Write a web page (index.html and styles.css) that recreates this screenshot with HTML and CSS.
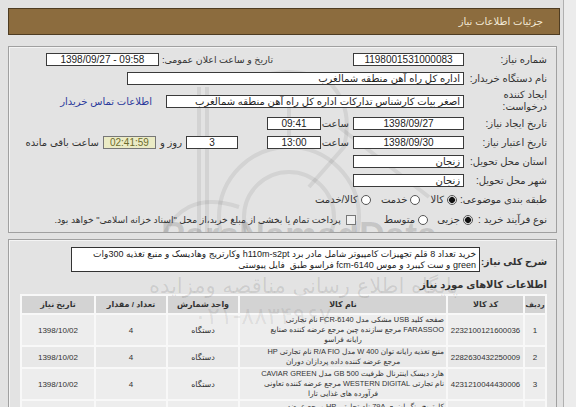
FILE: index.html
```html
<!DOCTYPE html>
<html lang="fa">
<head>
<meta charset="utf-8">
<title>جزئیات اطلاعات نیاز</title>
<link rel="stylesheet" href="styles.css">
</head>
<body>
<div class="page">
  <div class="header">جزئیات اطلاعات نیاز</div>

  <div class="panel info">
    <div class="wm-latin">ParsNamadData</div>
    <svg class="wm-logo" width="300" height="190" viewBox="0 0 300 190">
      <circle cx="150" cy="150" r="70" />
      <circle cx="150" cy="150" r="45" />
      <path d="M60 20 L60 190 M68 20 L68 190 M110 15 Q150 -5 190 15 Q215 40 205 80 L170 120" />
      <path d="M20 180 Q40 120 100 140 M200 60 L290 130 M150 30 L150 80" />
    </svg>

    <div class="row">
      <div class="lbl">شماره نیاز:</div>
      <div class="box w111">1198001531000083</div>
      <div class="lbl2">تاریخ و ساعت اعلان عمومی:</div>
      <div class="box w113 ml3 ltr">1398/09/27 - 09:58</div>
    </div>

    <div class="row">
      <div class="lbl">نام دستگاه خریدار:</div>
      <div class="box w337 tr">اداره کل راه آهن منطقه شمالغرب</div>
    </div>

    <div class="row tall">
      <div class="lbl">ایجاد کننده<br>درخواست:</div>
      <div class="box w298 tr">اصغر بیات کارشناس تدارکات اداره کل راه آهن منطقه شمالغرب</div>
      <a class="link" href="#">اطلاعات تماس خریدار</a>
    </div>

    <div class="row">
      <div class="lbl">تاریخ ایجاد نیاز:</div>
      <div class="box w111">1398/09/27</div>
      <div class="hour">ساعت</div>
      <div class="box w54">09:41</div>
    </div>

    <div class="row">
      <div class="lbl">تاریخ اعتبار نیاز:</div>
      <div class="box w111">1398/09/30</div>
      <div class="hour">ساعت</div>
      <div class="box w54">13:00</div>
      <div class="box w52 days">3</div>
      <div class="small-lbl">روز و</div>
      <div class="box w53 timer">02:41:59</div>
      <div class="small-lbl">ساعت باقی مانده</div>
    </div>

    <div class="row">
      <div class="lbl">استان محل تحویل:</div>
      <div class="box w111 tr">زنجان</div>
    </div>

    <div class="row">
      <div class="lbl">شهر محل تحویل:</div>
      <div class="box w111 tr">زنجان</div>
    </div>

    <div class="row">
      <div class="lbl">طبقه بندی موضوعی:</div>
      <div class="opts cat">
        <span class="opt"><span class="radio on"></span>کالا</span>
        <span class="opt"><span class="radio"></span>خدمت</span>
        <span class="opt"><span class="radio"></span>کالا/خدمت</span>
      </div>
    </div>

    <div class="row last">
      <div class="lbl narrow">نوع فرآیند خرید :</div>
      <div class="opts proc">
        <span class="opt"><span class="radio on"></span>جزیی</span>
        <span class="opt"><span class="radio"></span>متوسط</span>
        <span class="opt wide"><span class="check"></span><span class="note">پرداخت تمام یا بخشی از مبلغ خرید،از محل "اسناد خزانه اسلامی" خواهد بود.</span></span>
      </div>
    </div>
  </div>

  <div class="panel details">
    <div class="desc-row">
      <div class="desc-lbl">شرح کلی نیاز:</div>
      <div class="desc-box">خرید تعداد 8 قلم تجهیزات کامپیوتر شامل مادر برد h110m-s2pt وکارتریج وهادیسک و منبع تغذیه 300وات<br>green و ست کیبرد و موس fcm-6140 فراسو طبق&nbsp; فایل پیوستی</div>
    </div>

    <div class="section-title">اطلاعات کالاهای مورد نیاز</div>

    <table class="goods">
      <colgroup>
        <col class="c-idx"><col class="c-code"><col class="c-name"><col class="c-unit"><col class="c-qty"><col class="c-date">
      </colgroup>
      <thead>
        <tr><th>ردیف</th><th>کد کالا</th><th>نام کالا</th><th>واحد شمارش</th><th>تعداد / مقدار</th><th>تاریخ نیاز</th></tr>
      </thead>
      <tbody>
        <tr class="r1">
          <td>1</td><td class="code">2232100121600036</td>
          <td class="name">صفحه کلید USB مشکی مدل FCR-6140 نام تجارتی<br>FARASSOO مرجع سازنده چین مرجع عرضه کننده صنایع<br><span class="ctr">رایانه فراسو</span></td>
          <td>دستگاه</td><td>4</td><td>1398/10/02</td>
        </tr>
        <tr class="r2">
          <td>2</td><td class="code">2282630432250009</td>
          <td class="name">منبع تغذیه رایانه توان 400 W مدل R/A FIO نام تجارتی HP<br><span class="ctr">مرجع عرضه کننده داده پردازان دوران</span></td>
          <td>دستگاه</td><td>4</td><td>1398/10/02</td>
        </tr>
        <tr class="r3">
          <td>3</td><td class="code">4231210044430006</td>
          <td class="name">هارد دیسک اینترنال ظرفیت 500 GB مدل CAVIAR GREEN<br>نام تجارتی WESTERN DIGITAL مرجع عرضه کننده تعاونی<br><span class="ctr">فرآورده های غذایی تارا</span></td>
          <td>دستگاه</td><td>4</td><td>1398/10/02</td>
        </tr>
        <tr class="r4">
          <td>4</td><td class="code">4411210044430011</td>
          <td class="name">کارتریج رنگ لیزری 79A نام تجارتی HP مرجع عرضه<br>کننده داده پردازان دوران</td>
          <td>عدد</td><td>4</td><td>1398/10/02</td>
        </tr>
      </tbody>
    </table>

    <div class="wm-fa">پایگاه اطلاع رسانی مناقصه ومزایده</div>
    <div class="wm-phone">۰۲۱-۸۸۳۴۹۶۷۰</div>
  </div>
</div>
</body>
</html>
```

FILE: styles.css
```css
* { box-sizing: border-box; }
html, body { margin: 0; padding: 0; }
body {
  width: 576px;
  height: 407px;
  overflow: hidden;
  background: #ececec;
  font-family: "Liberation Sans", "DejaVu Sans", sans-serif;
  font-size: 10px;
  color: #222;
}
.page {
  direction: rtl;
  width: 564px;
  height: 407px;
  overflow: hidden;
  padding: 8px 0 0 8px;
  background: #e2e2e2;
  border-right: 1px solid #b0b0b0;
}
.header {
  width: 552px;
  height: 27px;
  margin-right: 3px;
  background: #8c6c3e;
  border: 1px solid #4e3c22;
  color: #f3ead6;
  font-size: 10px;
  line-height: 25px;
  padding-right: 16px;
}
.panel {
  position: relative;
  overflow: hidden;
  width: 549px;
  margin-right: 6px;
  border: 1px solid #a0a0a0;
  box-shadow: inset 1px 1px 0 #f4f4f4;
  background: #e3e3e3;
}
.info {
  margin-top: 11px;
  height: 187px;
  padding: 3px 9px 0 0;
}
.details {
  margin-top: 6px;
  height: 200px;
  padding: 7px 9px 0 0;
}

/* watermark */
.wm-latin {
  position: absolute;
  left: 152px;
  top: 168px;
  font-size: 36px;
  font-weight: bold;
  color: rgba(0, 0, 0, 0.13);
  direction: ltr;
  white-space: nowrap;
}
.wm-logo {
  position: absolute;
  left: 130px;
  top: 20px;
  fill: none;
  stroke: rgba(0, 0, 0, 0.07);
  stroke-width: 4;
}
.wm-fa {
  position: absolute;
  z-index: 2;
  left: 140px;
  top: 34px;
  font-size: 21px;
  font-family: "DejaVu Sans", sans-serif;
  color: rgba(0, 0, 0, 0.1);
  white-space: nowrap;
  pointer-events: none;
}
.wm-phone {
  position: absolute;
  z-index: 2;
  left: 185px;
  top: 62px;
  font-size: 24px;
  font-family: "DejaVu Sans", sans-serif;
  color: rgba(0, 0, 0, 0.08);
  white-space: nowrap;
  direction: ltr;
  pointer-events: none;
}

/* rows */
.row {
  position: relative;
  display: flex;
  align-items: center;
  height: 19px;
  white-space: nowrap;
}
.row.tall { height: 26px; }
.row.last { height: 21px; }
.lbl {
  width: 83px;
  flex: none;
  color: #333;
  line-height: 12px;
}
.lbl.narrow { width: 74px; }
.box {
  flex: none;
  height: 13px;
  border: 1px solid #3a3a3a;
  background: #fff;
  padding: 0 3px;
  line-height: 11px;
  text-align: center;
  color: #222;
  overflow: hidden;
}
.ltr { direction: ltr; }
.tr { text-align: right; }
.w111 { width: 111px; }
.w113 { width: 113px; }
.w337 { width: 337px; }
.w298 { width: 298px; }
.w54 { width: 54px; }
.w52 { width: 52px; }
.w53 { width: 53px; }
.ml3 { margin-right: 3px; }
.lbl2 {
  margin-right: 80px;
  flex: none;
  font-size: 9.4px;
  color: #333;
}
.link {
  margin-right: 14px;
  color: #2b3a9c;
  text-decoration: none;
}
.hour {
  margin-right: 4px;
  width: 28px;
  color: #333;
}
.days { margin-right: 29px; }
.small-lbl {
  margin-right: 4px;
  color: #333;
}
.timer {
  margin-right: 4px;
  background: #ebebc5;
  color: #6b6b2c;
  border-color: #777;
}

/* options */
.opts { display: flex; align-items: center; }
.opt { display: inline-flex; align-items: center; color: #333; }
.cat { margin-right: 7px; }
.cat .opt + .opt { margin-right: 10px; }
.proc .opt + .opt { margin-right: 9px; }
.proc .opt.wide { margin-right: 28px; }
.note { font-size: 9.2px; }
.radio {
  width: 10px;
  height: 10px;
  border-radius: 50%;
  border: 1px solid #555;
  background: #fff;
  margin-left: 3px;
  flex: none;
}
.radio.on {
  background: radial-gradient(circle, #111 0, #111 2.6px, #bbb 3.2px, #fff 4px);
}
.check {
  width: 10px;
  height: 10px;
  border: 1px solid #777;
  background: #f2f2f2;
  margin-left: 5px;
  flex: none;
}

/* description */
.desc-row {
  display: flex;
  align-items: center;
}
.desc-lbl {
  width: 67px;
  flex: none;
  font-weight: bold;
  font-size: 9.5px;
  white-space: nowrap;
  color: #333;
  padding-top: 3px;
}
.desc-box {
  width: 409px;
  height: 25px;
  border: 1px solid #333;
  background: #fff;
  padding: 1px 3px 0;
  line-height: 11px;
  font-size: 9px;
  white-space: nowrap;
  overflow: hidden;
}
.section-title {
  margin-top: 7px;
  font-weight: bold;
  font-size: 10px;
  color: #333;
  height: 12px;
  line-height: 12px;
}

/* table */
.goods {
  margin-top: 3px;
  width: 525px;
  border-collapse: collapse;
  table-layout: fixed;
  font-size: 8px;
}
.c-idx { width: 22px; }
.c-code { width: 77px; }
.c-name { width: 208px; }
.c-unit { width: 72px; }
.c-qty { width: 72px; }
.c-date { width: 74px; }
.goods th, .goods td {
  border: 2px solid #f8f8f8;
  text-align: center;
  color: #333;
  padding: 0 2px;
  white-space: nowrap;
  overflow: hidden;
}
.goods th {
  background: #d3d3d3;
  height: 19px;
  font-weight: bold;
  font-size: 8px;
}
.goods th:first-child { padding: 0; font-size: 7.2px; }
.goods td {
  background: #ededed;
  font-size: 8px;
}
.goods td.code { padding: 0; font-size: 7.8px; }
.goods td.name {
  text-align: right;
  line-height: 10px;
  padding: 0 2px;
  font-size: 7.4px;
}
.goods .ctr { display: block; text-align: center; }
.goods .r2 td { background: #e8e8e8; }
.r1 td { height: 31px; }
.r2 td { height: 22px; }
.r3 td { height: 32px; }
.r4 td { height: 24px; }
```
